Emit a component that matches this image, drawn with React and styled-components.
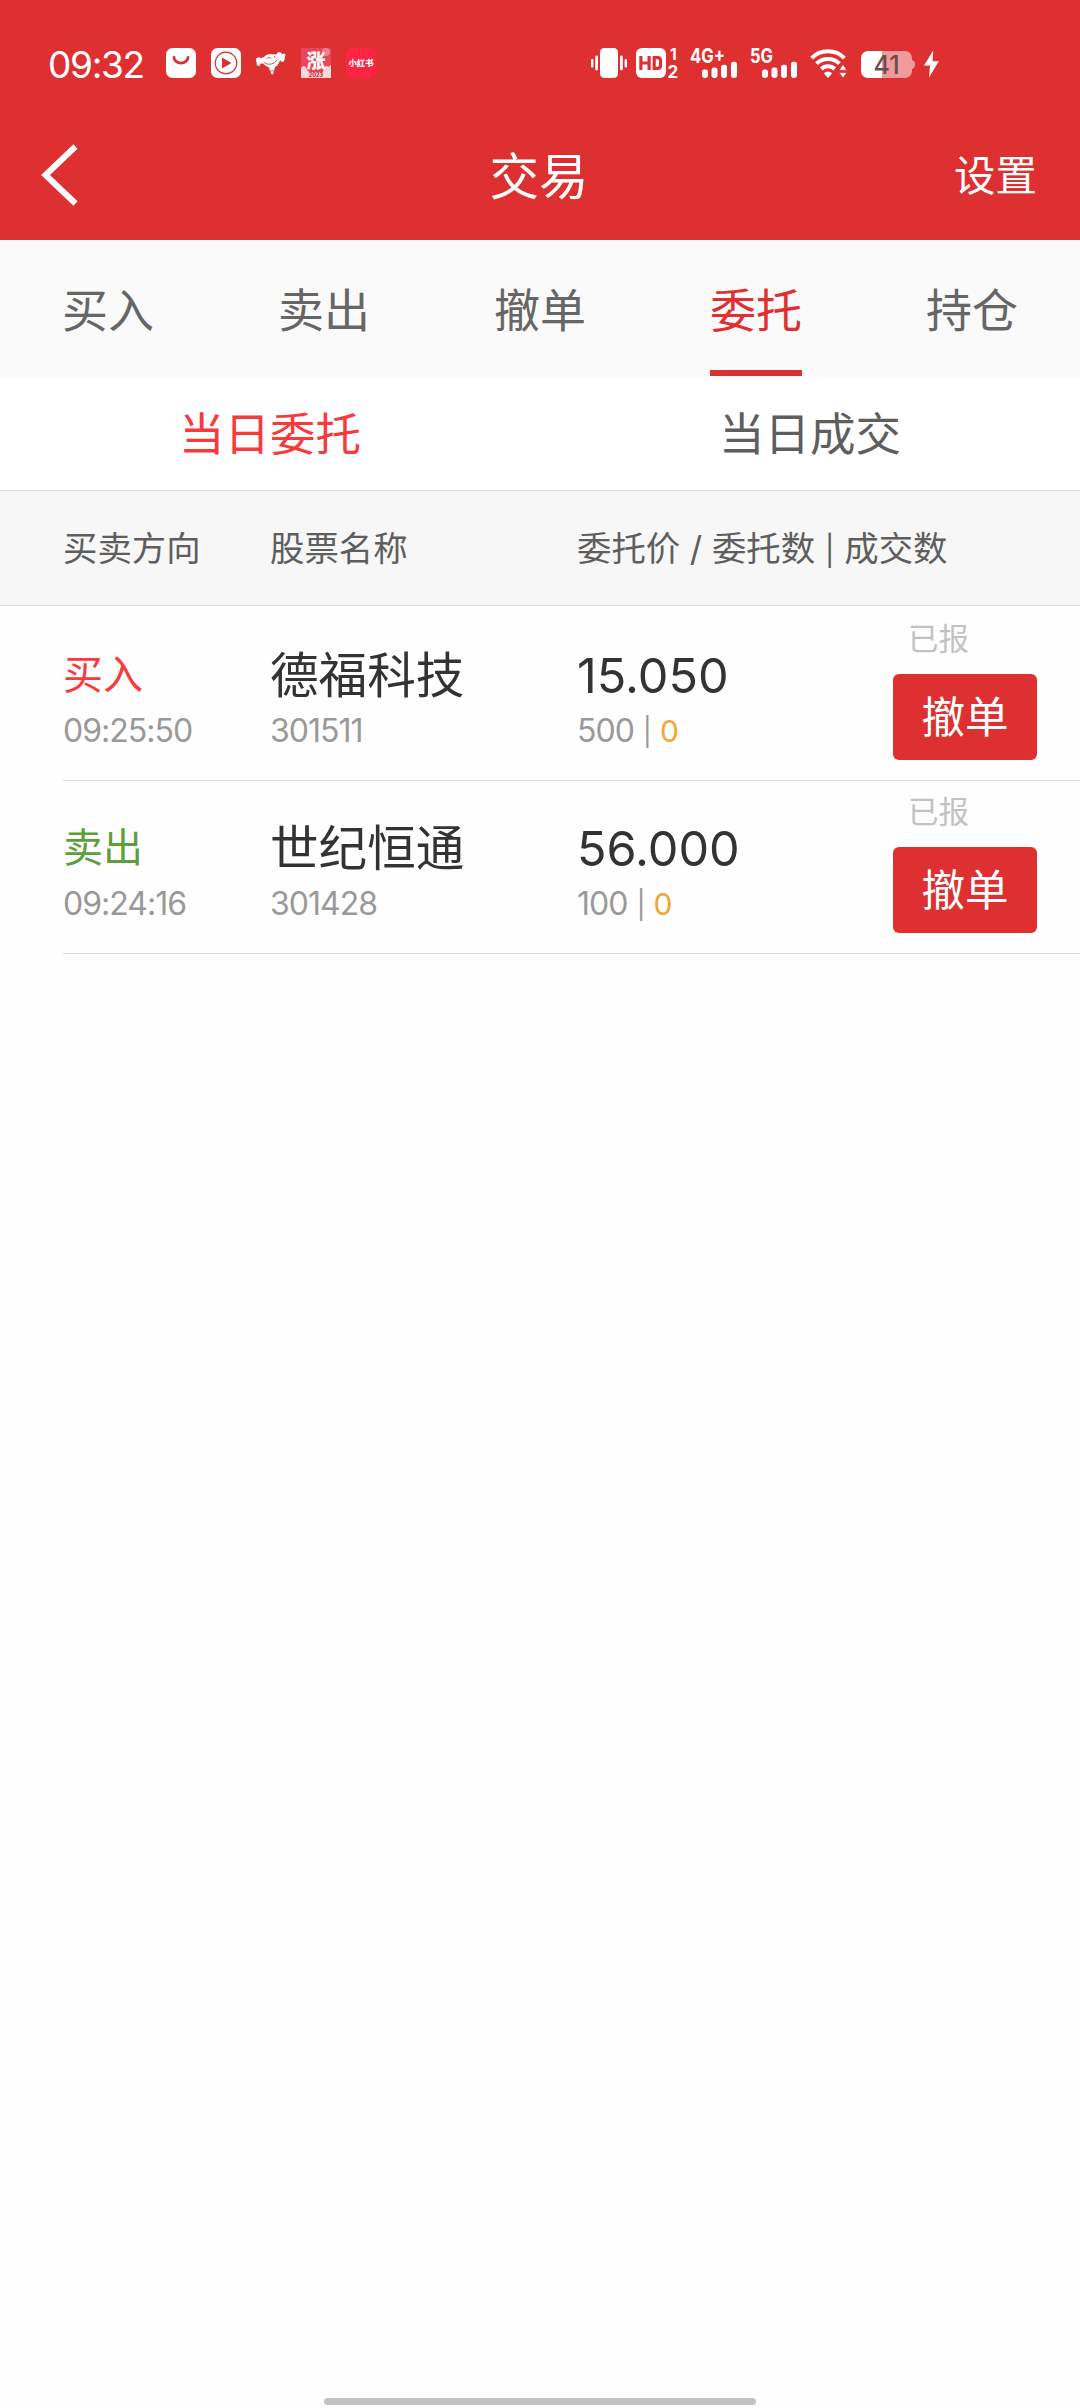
import React from 'react';
import styled, { createGlobalStyle } from 'styled-components';

const GlobalStyle = createGlobalStyle`
    * {
        box-sizing: border-box;
    }
    body {
        margin: 0;
        background: #fefefe;
        font-family: Inter, "Noto Sans CJK SC", sans-serif;
    }
    button {
        font-family: inherit;
        border: 0;
        padding: 0;
    }
    svg {
        display: block;
        flex-shrink: 0;
        overflow: visible;
    }
`;

const Screen = styled.div`
    display: flex;
    flex-direction: column;
    width: 1080px;
    height: 2408px;
    background: #fefefe;
    white-space: nowrap;
    overflow: hidden;
`;

const StatusBar = styled.div`
    display: flex;
    justify-content: space-between;
    height: 110px;
    padding: 48px 141px 0 48px;
    background: #de3031;
    color: #fff;
`;

const StatusGroup = styled.div`
    display: flex;
    align-items: flex-start;
    height: 30px;
    gap: ${({ $gap }) => $gap}px;
`;

const Clock = styled.span`
    width: 103px;
    font-size: 37px;
    line-height: 34px;
    letter-spacing: -1.3px;
`;

const NavBar = styled.header`
    display: grid;
    grid-template-columns: 200px 1fr 200px;
    align-items: center;
    height: 130px;
    padding: 0 43px 0 41px;
    background: #de3031;
    color: #fff;
    h1 {
        margin: 0;
        padding-top: 4px;
        text-align: center;
        font-size: 49.5px;
        font-weight: 400;
        line-height: 60px;
    }
`;

const Settings = styled.span`
    padding-top: 2px;
    text-align: right;
    font-size: 41.5px;
    line-height: 50px;
`;

const Tabs = styled.nav`
    display: grid;
    grid-template-columns: repeat(5, 1fr);
    justify-items: center;
    height: 138px;
    background: #fafafa;
`;

const Tab = styled.div`
    height: 136px;
    border-bottom: 6px solid ${({ $active }) => ($active ? '#de3031' : 'transparent')};
    color: ${({ $active }) => ($active ? '#de3031' : '#666')};
    font-size: 46px;
    line-height: 140px;
`;

const SubTabs = styled.div`
    display: grid;
    grid-template-columns: 1fr 1fr;
    height: 113px;
    border-bottom: 1px solid #dcdcdc;
    background: #fff;
`;

const SubTab = styled.div`
    text-align: center;
    color: ${({ $active }) => ($active ? '#f73b3d' : '#5e5e5e')};
    font-size: 45.5px;
    line-height: 114px;
`;

const TableHead = styled.div`
    display: grid;
    grid-template-columns: 207px 307px 1fr;
    height: 115px;
    padding-left: 63px;
    border-bottom: 1px solid #dcdcdc;
    background: #f7f7f7;
    color: #5e5e5e;
    font-size: 34.4px;
    line-height: 115px;
`;

const Pipe = styled.span`
    font-size: 0.86em;
`;

const List = styled.div`
    padding: 2px 0 0 63px;
`;

const Row = styled.div`
    display: grid;
    grid-template-columns: 207px 307px 316px 1fr;
    height: 173px;
    border-bottom: 1px solid #dcdcdc;
`;

const Cell = styled.div`
    display: flex;
    flex-direction: column;
    padding-top: 36px;
`;

const Side = styled.span`
    height: 64px;
    color: ${({ $sell }) => ($sell ? '#5c9f3c' : '#f73b3d')};
    font-size: 40px;
    line-height: 62px;
`;

const Name = styled.span`
    color: #333;
    font-size: 48.6px;
    line-height: 64px;
`;

const Price = styled.span`
    color: #333;
    font-size: 48.6px;
    line-height: 64px;
`;

const Sub = styled.span`
    color: #999;
    font-size: 32px;
    line-height: 46px;
    letter-spacing: -1px;
    word-spacing: 1px;
    em {
        color: #eda63a;
        font-size: 30px;
        font-style: normal;
    }
`;

const Action = styled.div`
    display: flex;
    flex-direction: column;
    width: 144px;
`;

const State = styled.span`
    padding-left: 15px;
    height: 66px;
    color: #c2c2c2;
    font-size: 30.5px;
    line-height: 62px;
`;

const CancelButton = styled.button`
    height: 86px;
    border-radius: 6px;
    background: #de3031;
    color: #fff;
    font-size: 43.5px;
    line-height: 84px;
`;

const HomeIndicator = styled.div`
    width: 432px;
    height: 7px;
    margin: auto auto 3px;
    border-radius: 4px;
    background: #c2c2c2;
`;

const BagIcon = () => (
    <svg width="30" height="30" viewBox="0 0 30 30">
        <rect width="30" height="30" rx="6.5" fill="#fff" />
        <path d="M8 9.3a7 5.8 0 0 0 14 0" fill="none" stroke="#de3031" strokeWidth="2.8" strokeLinecap="round" />
    </svg>
);

const PlayIcon = () => (
    <svg width="30" height="30" viewBox="0 0 30 30">
        <rect width="30" height="30" rx="6.5" fill="#fff" />
        <circle cx="15" cy="15" r="10.8" fill="none" stroke="#de3031" strokeWidth="1.2" />
        <path d="M11 9.5v11l9.5-5.5z" fill="#de3031" />
    </svg>
);

const DogIcon = () => (
    <svg width="30" height="30" viewBox="0 0 30 30">
        <path
            d="M.2 12Q-.2 9.6 1.8 9.8Q3.4 8.4 4.6 10.2L7.6 9.2Q11 5.6 15.5 6.2L20.5 6.4Q21.5 3.6 24 4.2Q25.6 4.6 26.4 6.4Q28.2 4.8 29.2 6.2Q30 7.6 28.8 9Q29 12 27.4 13.8Q25.6 14.2 24.2 12.6Q22.6 17.2 18.6 19.6L18.4 22.4H13.6L13.2 19.4Q9.4 18.4 7 15.6L4.6 15.4Q4 18.4 2 17.8Q0 17.2 .8 14.8Q-.4 13.6 .2 12Z"
            fill="#fff"
        />
        <path d="M14.6 23.2h3.2l-.4 2.2-1.2 1-1.2-1z" fill="#fff" />
        <path d="M8 14.4Q11 16.8 15 16.2T21.4 11.2M10.5 10.4Q13 8.8 15.6 10" fill="none" stroke="#de3031" strokeWidth="0.8" />
        <circle cx="18.6" cy="9" r="0.8" fill="#de3031" />
    </svg>
);

const RiseIcon = () => (
    <svg width="30" height="30" viewBox="0 0 30 30">
        <rect width="30" height="30" fill="#e6485a" />
        <circle cx="25" cy="4" r="4" fill="#f1808a" />
        <path d="M0 30V20Q3 16 5 20T9 24H22Q24 15 27 19L30 17V30Z" fill="#fbd9d8" />
        <text x="15" y="20" textAnchor="middle" fontSize="19" fontWeight="900" fill="#fff">涨</text>
        <text x="15" y="28.5" textAnchor="middle" fontSize="5.5" fontWeight="800" fill="#d92c40">2023</text>
    </svg>
);

const RedNoteIcon = () => (
    <svg width="30" height="30" viewBox="0 0 30 30">
        <rect width="30" height="30" rx="6.5" fill="#ff2442" />
        <text x="15" y="18.2" textAnchor="middle" fontSize="8.4" fontWeight="900" fill="#fff">小红书</text>
    </svg>
);

const VibrateIcon = () => (
    <svg width="36" height="30" viewBox="0 0 36 30" fill="#fff">
        <rect x="9" width="18" height="30" rx="4.5" />
        <rect x="0" y="11" width="2.4" height="8.5" rx="1.2" />
        <rect x="4.2" y="7.5" width="2.8" height="15" rx="1.4" />
        <rect x="29" y="7.5" width="2.8" height="15" rx="1.4" />
        <rect x="33.6" y="11" width="2.4" height="8.5" rx="1.2" />
    </svg>
);

const HdIcon = () => (
    <svg width="45" height="30" viewBox="0 0 45 30">
        <rect width="30" height="30" rx="6" fill="#fff" />
        <path d="M4.9 8v14M13.1 8v14M5 15h8" fill="none" stroke="#de3031" strokeWidth="3.2" />
        <path d="M18.2 9.6h3.3q3 0 3 3v4.8q0 3-3 3h-3.3z" fill="none" stroke="#de3031" strokeWidth="3.2" />
        <text x="34" y="11.5" fontSize="15.5" fontWeight="700" fill="#fff">1</text>
        <text x="31.5" y="29.5" fontSize="17" fontWeight="700" fill="#fff">2</text>
    </svg>
);

const SignalIcon = ({ label, width }) => (
    <svg width="51" height="30" viewBox="0 0 51 30" fill="#fff">
        <text x="0" y="14.5" fontSize="20" fontWeight="700" textLength={width} lengthAdjust="spacingAndGlyphs">
            {label}
        </text>
        <rect x="12" y="21.5" width="6" height="8.5" rx="2.4" />
        <rect x="21.5" y="19.5" width="6" height="10.5" rx="2.4" />
        <rect x="31" y="16.8" width="6" height="13.2" rx="2.4" />
        <rect x="41" y="13.8" width="6" height="16.2" rx="2.4" />
    </svg>
);

const WifiIcon = () => (
    <svg width="42" height="30" viewBox="0 0 42 30">
        <g fill="none" stroke="#fff" strokeWidth="4">
            <path d="M1.6 10.2a23 23 0 0 1 32.8 0" />
            <path d="M6.6 15.6a16.3 16.3 0 0 1 22.8 0" />
            <path d="M11.3 21a9.6 9.6 0 0 1 13.4 0" />
        </g>
        <path d="M13.8 25.2a6 6 0 0 1 8.4 0L18 30z" fill="#fff" />
        <path d="M29 22.3 33 16.5 37 22.3ZM29 24.6h8L33 30Z" fill="#fff" stroke="#de3031" strokeWidth="0.8" />
    </svg>
);

const BatteryIcon = () => (
    <svg width="54" height="30" viewBox="0 0 54 30">
        <path d="M21 3H44a7 7 0 0 1 7 7V23a7 7 0 0 1-7 7H21Z" fill="#f09a9b" />
        <path d="M51 12q3 .6 3 4.5T51 21z" fill="#f09a9b" />
        <path d="M21 3H7a7 7 0 0 0-7 7V23a7 7 0 0 0 7 7H21Z" fill="#fff" />
        <text x="25.5" y="25.5" textAnchor="middle" fontSize="25" fontWeight="500" fill="#6e4a4a">41</text>
    </svg>
);

const BoltIcon = () => (
    <svg width="15" height="30" viewBox="0 0 15 30">
        <path d="M9.2 2.5 0 17.5H6L5 29.5 14.8 13.2H8.6Z" fill="#fff" />
    </svg>
);

const tabs = ['买入', '卖出', '撤单', '委托', '持仓'];

const orders = [
    { side: '买入', time: '09:25:50', name: '德福科技', code: '301511', price: '15.050', amount: 500, filled: 0, state: '已报' },
    { side: '卖出', time: '09:24:16', name: '世纪恒通', code: '301428', price: '56.000', amount: 100, filled: 0, state: '已报' },
];

const OrderRow = ({ order }) => (
    <Row>
        <Cell>
            <Side $sell={order.side === '卖出'}>{order.side}</Side>
            <Sub>{order.time}</Sub>
        </Cell>
        <Cell>
            <Name>{order.name}</Name>
            <Sub>{order.code}</Sub>
        </Cell>
        <Cell>
            <Price>{order.price}</Price>
            <Sub>{order.amount} <Pipe>|</Pipe> <em>{order.filled}</em></Sub>
        </Cell>
        <Action>
            <State>{order.state}</State>
            <CancelButton>撤单</CancelButton>
        </Action>
    </Row>
);

const App = () => {
    return (
        <Screen>
            <GlobalStyle />
            <StatusBar>
                <StatusGroup $gap={15}>
                    <Clock>09:32</Clock>
                    <BagIcon />
                    <PlayIcon />
                    <DogIcon />
                    <RiseIcon />
                    <RedNoteIcon />
                </StatusGroup>
                <StatusGroup $gap={9}>
                    <VibrateIcon />
                    <HdIcon />
                    <SignalIcon label="4G+" width={35} />
                    <SignalIcon label="5G" width={23} />
                    <WifiIcon />
                    <BatteryIcon />
                    <BoltIcon />
                </StatusGroup>
            </StatusBar>
            <NavBar>
                <svg width="37" height="62" viewBox="0 0 37 62">
                    <path d="M34.5 2.5 4.5 31 34.5 59.5" fill="none" stroke="#fff" strokeWidth="6" />
                </svg>
                <h1>交易</h1>
                <Settings>设置</Settings>
            </NavBar>
            <Tabs>
                {tabs.map((tab) => (
                    <Tab key={tab} $active={tab === '委托'}>{tab}</Tab>
                ))}
            </Tabs>
            <SubTabs>
                <SubTab $active>当日委托</SubTab>
                <SubTab>当日成交</SubTab>
            </SubTabs>
            <TableHead>
                <span>买卖方向</span>
                <span>股票名称</span>
                <span>委托价 / 委托数 <Pipe>|</Pipe> 成交数</span>
            </TableHead>
            <List>
                {orders.map((order) => (
                    <OrderRow key={order.code} order={order} />
                ))}
            </List>
            <HomeIndicator />
        </Screen>
    );
};

export default App;
